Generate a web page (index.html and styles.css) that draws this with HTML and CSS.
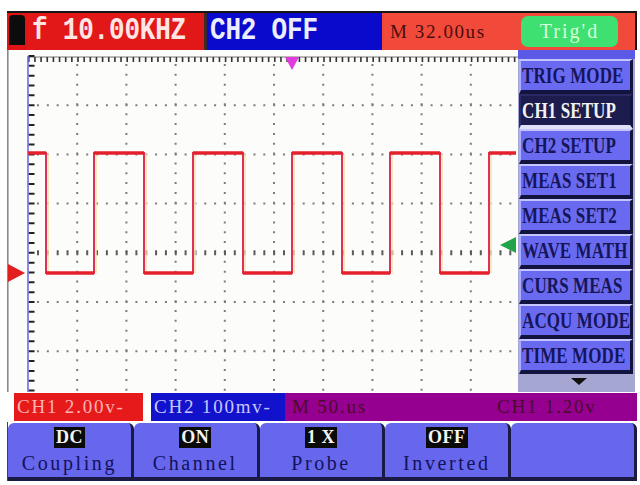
FILE: index.html
```html
<!DOCTYPE html>
<html>
<head>
<meta charset="utf-8">
<link rel="stylesheet" href="styles.css">
</head>
<body>
<div class="scope">
  <div class="topbar">
    <div class="batt"><span class="batt-cell"></span></div>
    <div class="freq"><span class="big">f 10.00KHZ</span></div>
    <div class="ch2off"><span class="big">CH2 OFF</span></div>
    <div class="tbase">
      <span class="tb-text">M 32.00us</span>
      <span class="trig">Trig'd</span>
    </div>
  </div>
  <div class="middle">
    <div class="plot">
      <svg width="511" height="342" viewBox="0 0 511 342">
        <rect x="0" y="0" width="511" height="342" fill="#fcfcfa"/>
        <line x1="0.8" y1="0" x2="0.8" y2="342" stroke="#8a8a8a" stroke-width="1.6"/>
        <g stroke="#7c7c7c" stroke-width="2" stroke-dasharray="2 7.84">
          <line x1="70.2" y1="14" x2="70.2" y2="342"/>
          <line x1="119.4" y1="14" x2="119.4" y2="342"/>
          <line x1="168.6" y1="14" x2="168.6" y2="342"/>
          <line x1="217.8" y1="14" x2="217.8" y2="342"/>
          <line x1="267" y1="14" x2="267" y2="342"/>
          <line x1="316.2" y1="14" x2="316.2" y2="342"/>
          <line x1="365.4" y1="14" x2="365.4" y2="342"/>
          <line x1="414.6" y1="14" x2="414.6" y2="342"/>
          <line x1="463.8" y1="14" x2="463.8" y2="342"/>
          <line x1="30" y1="55.2" x2="511" y2="55.2"/>
          <line x1="30" y1="104.4" x2="511" y2="104.4"/>
          <line x1="30" y1="153.6" x2="511" y2="153.6"/>
          <line x1="30" y1="252" x2="511" y2="252"/>
          <line x1="30" y1="301.2" x2="511" y2="301.2"/>
        </g>
        <line x1="30" y1="202.8" x2="511" y2="202.8" stroke="#5a5a5a" stroke-width="5" stroke-dasharray="2 7.84"/>
        <line x1="21" y1="7" x2="511" y2="7" stroke="#777" stroke-width="1"/>
        <line x1="21" y1="9.5" x2="511" y2="9.5" stroke="#333" stroke-width="5" stroke-dasharray="1.6 4.55"/>
        <line x1="24.5" y1="5" x2="24.5" y2="342" stroke="#222" stroke-width="6" stroke-dasharray="2 7.84"/>
        <line x1="21" y1="6" x2="21" y2="342" stroke="#6c6cdc" stroke-width="1.6"/>
        <g stroke="#f6e6a8" stroke-width="1.5" fill="none">
          <line x1="41" y1="104" x2="41" y2="223"/>
          <line x1="89" y1="104" x2="89" y2="223"/>
          <line x1="139" y1="104" x2="139" y2="223"/>
          <line x1="188" y1="104" x2="188" y2="223"/>
          <line x1="238" y1="104" x2="238" y2="223"/>
          <line x1="287" y1="104" x2="287" y2="223"/>
          <line x1="337" y1="104" x2="337" y2="223"/>
          <line x1="385" y1="104" x2="385" y2="223"/>
          <line x1="435" y1="104" x2="435" y2="223"/>
          <line x1="484" y1="104" x2="484" y2="223"/>
        </g>
        <polyline fill="none" stroke="#e0305a" stroke-width="2" points="21,103 39,103 39,223 87,223 87,103 137,103 137,223 186,223 186,103 236,103 236,223 285,223 285,103 335,103 335,223 383,223 383,103 433,103 433,223 482,223 482,103 509,103"/>
        <g stroke="#e4202a" stroke-width="3.5">
          <line x1="21" y1="103" x2="39" y2="103"/>
          <line x1="39" y1="223" x2="87" y2="223"/>
          <line x1="87" y1="103" x2="137" y2="103"/>
          <line x1="137" y1="223" x2="186" y2="223"/>
          <line x1="186" y1="103" x2="236" y2="103"/>
          <line x1="236" y1="223" x2="285" y2="223"/>
          <line x1="285" y1="103" x2="335" y2="103"/>
          <line x1="335" y1="223" x2="383" y2="223"/>
          <line x1="383" y1="103" x2="433" y2="103"/>
          <line x1="433" y1="223" x2="482" y2="223"/>
          <line x1="482" y1="103" x2="509" y2="103"/>
        </g>
        <polygon points="278,7 292,7 285,20" fill="#e23ce0"/>
        <polygon points="1,214 1,232 18,223" fill="#e21e1e"/>
        <polygon points="509,187 509,203 493,195" fill="#22a34a"/>
      </svg>
    </div>
    <div class="menu">
      <div class="mbtn"><span class="t">TRIG MODE</span></div>
      <div class="mbtn active"><span class="t">CH1 SETUP</span></div>
      <div class="mbtn"><span class="t">CH2 SETUP</span></div>
      <div class="mbtn"><span class="t">MEAS SET1</span></div>
      <div class="mbtn"><span class="t">MEAS SET2</span></div>
      <div class="mbtn"><span class="t">WAVE MATH</span></div>
      <div class="mbtn"><span class="t">CURS MEAS</span></div>
      <div class="mbtn"><span class="t">ACQU MODE</span></div>
      <div class="mbtn"><span class="t">TIME MODE</span></div>
      <div class="more"><span class="down"></span></div>
    </div>
  </div>
  <div class="status">
    <div class="st st-ch1">CH1 2.00v-</div>
    <div class="st st-ch2">CH2 100mv-</div>
    <div class="st st-info">
      <span>M 50.us</span>
      <span>CH1 1.20v</span>
    </div>
  </div>
  <div class="softkeys">
    <div class="key"><span class="val">DC</span><span class="lbl">Coupling</span></div>
    <div class="key"><span class="val">ON</span><span class="lbl">Channel</span></div>
    <div class="key"><span class="val">1 X</span><span class="lbl">Probe</span></div>
    <div class="key"><span class="val">OFF</span><span class="lbl">Inverted</span></div>
    <div class="key"><span class="val empty"></span><span class="lbl"></span></div>
  </div>
</div>
</body>
</html>
```

FILE: styles.css
```css
* { box-sizing: border-box; }
html, body { margin: 0; padding: 0; background: #ffffff; }
body { font-family: "Liberation Mono", monospace; }

.scope {
  margin: 11px 0 0 7px;
  width: 630px;
}

/* ---------- top bar ---------- */
.topbar {
  display: flex;
  height: 39px;
  border-top: 2px solid #151515;
  border-right: 2px solid #151515;
}
.batt {
  width: 20px;
  background: #e01414;
  display: flex;
  justify-content: center;
  padding-top: 2px;
}
.batt-cell {
  width: 16px;
  height: 30px;
  background: #0c0c0c;
  border-radius: 4px 4px 0 0;
}
.big {
  display: inline-block;
  font-family: "Liberation Mono", monospace;
  font-weight: bold;
  font-size: 26px;
  letter-spacing: -0.2px;
  line-height: 37px;
  transform: scaleY(1.2);
}
.freq {
  width: 180px;
  background: #e21818;
  color: #ffe6e6;
  padding-left: 5px;
  border-right: 3px solid #3a2a2a;
}
.ch2off {
  width: 175px;
  background: #0a0acc;
  color: #ecedff;
  padding-left: 3px;
}
.tbase {
  flex: 1;
  background: #f24a3a;
  display: flex;
  align-items: center;
  padding: 0 17px 0 8px;
}
.tb-text {
  font-family: "Liberation Serif", serif;
  color: #4a0c0c;
  font-size: 19px;
  letter-spacing: 1.6px;
}
.trig {
  margin-left: auto;
  width: 97px;
  height: 31px;
  background: #3fe072;
  border-radius: 7px;
  color: #d8ffd8;
  font-family: "Liberation Serif", serif;
  font-size: 20px;
  letter-spacing: 2px;
  line-height: 31px;
  text-align: center;
}

/* ---------- middle ---------- */
.middle {
  display: flex;
  height: 342px;
}
.plot {
  width: 511px;
  height: 342px;
}
.plot svg { display: block; }

.menu {
  width: 117px;
  display: flex;
  flex-direction: column;
  padding: 9px 2px 0 1px;
  background: linear-gradient(#5a5ae6 0, #5a5ae6 9px, #a6a6d2 9px);
}
.mbtn {
  height: 35px;
  background: #6a6af0;
  border-top: 2px solid #c4c4ff;
  border-left: 2px solid #aab0ff;
  border-bottom: 4px solid #131340;
  border-right: 3px solid #131340;
  color: #15155a;
  font-family: "Liberation Serif", serif;
  font-weight: bold;
  font-size: 17px;
  letter-spacing: 0.1px;
  line-height: 29px;
  padding-left: 1px;
  white-space: nowrap;
}
.mbtn .t {
  display: inline-block;
  transform: scaleY(1.32);
}
.mbtn.active {
  background: #1c1c4e;
  color: #f2f2f2;
  border-top-color: #2a2a66;
  border-left-color: #2a2a66;
  border-bottom-color: #e0e0f8;
}
.more {
  flex: 1;
  display: flex;
  justify-content: center;
  padding-top: 4px;
  padding-left: 6px;
}
.down {
  width: 0;
  height: 0;
  border-left: 8px solid transparent;
  border-right: 8px solid transparent;
  border-top: 7px solid #111;
}

/* ---------- status ---------- */
.status {
  display: flex;
  height: 30px;
  padding: 1px 0 1px 7px;
  gap: 8px;
}
.st {
  height: 28px;
  line-height: 28px;
  font-family: "Liberation Serif", serif;
  font-size: 19px;
  letter-spacing: 1.8px;
  padding-left: 3px;
  white-space: nowrap;
}
.st-ch1 {
  width: 129px;
  background: #e61a1a;
  color: #ffb4b4;
}
.st-ch2 {
  width: 134px;
  background: #1212cc;
  color: #c6c6ff;
  margin-right: -8px;
}
.st-info {
  flex: 1;
  background: #960090;
  color: #4c0a2a;
  display: flex;
  padding-left: 7px;
}
.st-info span:first-child { width: 205px; }

/* ---------- softkeys ---------- */
.softkeys {
  display: flex;
  height: 59px;
  padding-top: 1px;
  border-left: 1px solid #444;
}
.key {
  flex: 1;
  display: flex;
  flex-direction: column;
  align-items: center;
  background: #6767ee;
  border-right: 3px solid #1a1a44;
  border-bottom: 4px solid #1a1a44;
  border-radius: 6px 6px 0 0;
}
.val {
  margin-top: 4px;
  height: 21px;
  background: #0a0a0a;
  color: #f4f4f4;
  font-family: "Liberation Serif", serif;
  font-weight: bold;
  font-size: 18px;
  line-height: 21px;
  padding: 0 2px;
  letter-spacing: 0.5px;
}
.val.empty { background: transparent; }
.lbl {
  margin-top: 3px;
  color: #12125a;
  font-family: "Liberation Serif", serif;
  font-size: 20px;
  letter-spacing: 2.6px;
  line-height: 24px;
}
```
